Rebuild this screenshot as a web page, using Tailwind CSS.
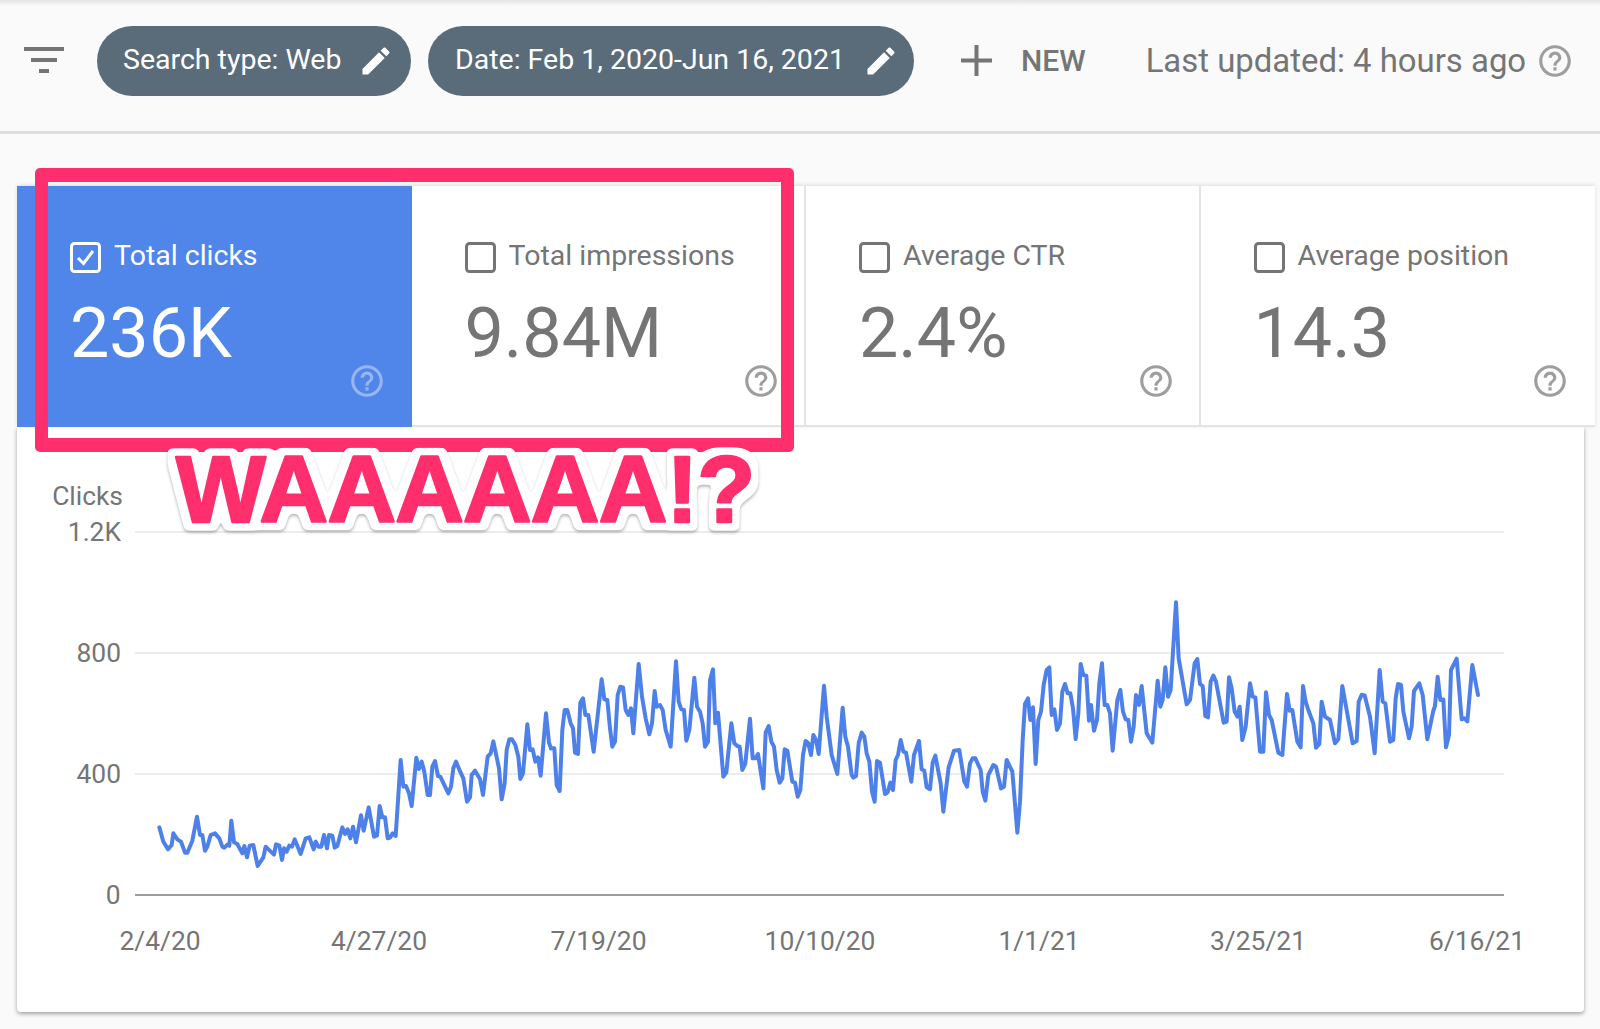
<!DOCTYPE html>
<html lang="en">
<head>
<meta charset="utf-8">
<title>Search performance</title>
<script src="https://cdn.jsdelivr.net/npm/@tailwindcss/browser@4"></script>
</head>
<body class="relative w-[1600px] h-[1029px] overflow-hidden bg-[#fafafa] font-['Roboto',sans-serif] text-[#757575]">
<header class="relative h-[134px] border-b-[3px] border-[#dedede] flex items-center pb-[10px]">
  <div class="absolute left-0 right-0 top-0 h-[6px] bg-gradient-to-b from-[#e4e4e4] to-[#fafafa]"></div>
  <svg class="ml-[24px] w-[40px] h-[26px] shrink-0 -mt-[2px]" viewBox="0 0 40 26" fill="#757575"><rect x="0" y="0" width="40" height="4"/><rect x="7" y="11" width="26" height="4"/><rect x="15" y="22" width="10" height="4"/></svg>
  <div class="ml-[33px] w-[314px] h-[70px] rounded-full bg-[#5a6c7a] text-white flex items-center pl-[26px] text-[28.5px] shrink-0">
    <span class="whitespace-nowrap">Search type: Web</span>
    <svg class="ml-[17px] w-[36px] h-[36px] shrink-0" viewBox="0 0 24 24" fill="#fff"><path d="M3 17.25V21h3.75L17.81 9.94l-3.75-3.75L3 17.25zM20.71 7.04c.39-.39.39-1.02 0-1.41l-2.34-2.34c-.39-.39-1.02-.39-1.41 0l-1.83 1.83 3.75 3.75 1.83-1.83z"/></svg>
  </div>
  <div class="ml-[17px] w-[486px] h-[70px] rounded-full bg-[#5a6c7a] text-white flex items-center pl-[27px] text-[28.5px] shrink-0">
    <span class="whitespace-nowrap">Date: Feb 1, 2020-Jun 16, 2021</span>
    <svg class="ml-[18px] w-[36px] h-[36px] shrink-0" viewBox="0 0 24 24" fill="#fff"><path d="M3 17.25V21h3.75L17.81 9.94l-3.75-3.75L3 17.25zM20.71 7.04c.39-.39.39-1.02 0-1.41l-2.34-2.34c-.39-.39-1.02-.39-1.41 0l-1.83 1.83 3.75 3.75 1.83-1.83z"/></svg>
  </div>
  <svg class="ml-[47px] w-[31px] h-[31px] shrink-0" viewBox="0 0 31 31" fill="#757575"><rect x="13.5" y="0" width="4" height="31"/><rect x="0" y="13.5" width="31" height="4"/></svg>
  <span class="ml-[29px] text-[30px] font-medium whitespace-nowrap">NEW</span>
  <span class="ml-[60px] text-[32.9px] whitespace-nowrap">Last updated: 4 hours ago</span>
  <svg class="ml-[10px] w-[38px] h-[38px] shrink-0" viewBox="0 0 24 24" fill="#9e9e9e"><path d="M11 18h2v-2h-2v2zm1-16C6.48 2 2 6.48 2 12s4.48 10 10 10 10-4.48 10-10S17.52 2 12 2zm0 18c-4.41 0-8-3.59-8-8s3.59-8 8-8 8 3.59 8 8-3.59 8-8 8zm0-14c-2.21 0-4 1.79-4 4h2c0-1.1.9-2 2-2s2 .9 2 2c0 2-3 1.75-3 5h2c0-2.25 3-2.5 3-5 0-2.21-1.79-4-4-4z"/></svg>
</header>

<main class="pt-[52px] pl-[17px]">
  <section class="relative z-10 w-[1578px] h-[241px] grid grid-cols-4 bg-white shadow-[0_-1px_4px_rgba(0,0,0,0.12)]">
    <div class="bg-[#5085e9] text-white pl-[53px] pt-[56px] pr-[26px]">
      <div class="flex items-center gap-[13px] h-[30px]">
        <svg class="w-[31px] h-[31px] shrink-0" viewBox="0 0 31 31" fill="none" stroke="#fff"><rect x="1.5" y="1.5" width="28" height="28" rx="3" stroke-width="3"/><path d="M8 16l5.5 5.5 9.5-12.5" stroke-width="3"/></svg>
        <span class="text-[28.5px] whitespace-nowrap -mt-[2px]">Total clicks</span>
      </div>
      <div class="mt-[26px] text-[70px] leading-[70px] whitespace-nowrap">236K</div>
      <div class="flex justify-end -mt-[6px]"><svg class="w-[38px] h-[38px]" viewBox="0 0 24 24" fill="#fff" fill-opacity="0.4"><path d="M11 18h2v-2h-2v2zm1-16C6.48 2 2 6.48 2 12s4.48 10 10 10 10-4.48 10-10S17.52 2 12 2zm0 18c-4.41 0-8-3.59-8-8s3.59-8 8-8 8 3.59 8 8-3.59 8-8 8zm0-14c-2.21 0-4 1.79-4 4h2c0-1.1.9-2 2-2s2 .9 2 2c0 2-3 1.75-3 5h2c0-2.25 3-2.5 3-5 0-2.21-1.79-4-4-4z"/></svg></div>
    </div>
    <div class="border-r-2 border-b-2 border-[#e4e4e4] pl-[53px] pt-[56px] pr-[24px]">
      <div class="flex items-center gap-[13px] h-[30px]">
        <svg class="w-[31px] h-[31px] shrink-0" viewBox="0 0 31 31" fill="none" stroke="#757575"><rect x="1.5" y="1.5" width="28" height="28" rx="3" stroke-width="3"/></svg>
        <span class="text-[28.5px] whitespace-nowrap -mt-[2px]">Total impressions</span>
      </div>
      <div class="mt-[26px] text-[70px] leading-[70px] whitespace-nowrap">9.84M</div>
      <div class="flex justify-end -mt-[6px]"><svg class="w-[38px] h-[38px]" viewBox="0 0 24 24" fill="#9e9e9e"><path d="M11 18h2v-2h-2v2zm1-16C6.48 2 2 6.48 2 12s4.48 10 10 10 10-4.48 10-10S17.52 2 12 2zm0 18c-4.41 0-8-3.59-8-8s3.59-8 8-8 8 3.59 8 8-3.59 8-8 8zm0-14c-2.21 0-4 1.79-4 4h2c0-1.1.9-2 2-2s2 .9 2 2c0 2-3 1.75-3 5h2c0-2.25 3-2.5 3-5 0-2.21-1.79-4-4-4z"/></svg></div>
    </div>
    <div class="border-r-2 border-b-2 border-[#e4e4e4] pl-[53px] pt-[56px] pr-[24px]">
      <div class="flex items-center gap-[13px] h-[30px]">
        <svg class="w-[31px] h-[31px] shrink-0" viewBox="0 0 31 31" fill="none" stroke="#757575"><rect x="1.5" y="1.5" width="28" height="28" rx="3" stroke-width="3"/></svg>
        <span class="text-[28.5px] whitespace-nowrap -mt-[2px]">Average CTR</span>
      </div>
      <div class="mt-[26px] text-[70px] leading-[70px] whitespace-nowrap">2.4%</div>
      <div class="flex justify-end -mt-[6px]"><svg class="w-[38px] h-[38px]" viewBox="0 0 24 24" fill="#9e9e9e"><path d="M11 18h2v-2h-2v2zm1-16C6.48 2 2 6.48 2 12s4.48 10 10 10 10-4.48 10-10S17.52 2 12 2zm0 18c-4.41 0-8-3.59-8-8s3.59-8 8-8 8 3.59 8 8-3.59 8-8 8zm0-14c-2.21 0-4 1.79-4 4h2c0-1.1.9-2 2-2s2 .9 2 2c0 2-3 1.75-3 5h2c0-2.25 3-2.5 3-5 0-2.21-1.79-4-4-4z"/></svg></div>
    </div>
    <div class="border-b-2 border-[#e4e4e4] pl-[53px] pt-[56px] pr-[26px]">
      <div class="flex items-center gap-[13px] h-[30px]">
        <svg class="w-[31px] h-[31px] shrink-0" viewBox="0 0 31 31" fill="none" stroke="#757575"><rect x="1.5" y="1.5" width="28" height="28" rx="3" stroke-width="3"/></svg>
        <span class="text-[28.5px] whitespace-nowrap -mt-[2px]">Average position</span>
      </div>
      <div class="mt-[26px] text-[70px] leading-[70px] whitespace-nowrap">14.3</div>
      <div class="flex justify-end -mt-[6px]"><svg class="w-[38px] h-[38px]" viewBox="0 0 24 24" fill="#9e9e9e"><path d="M11 18h2v-2h-2v2zm1-16C6.48 2 2 6.48 2 12s4.48 10 10 10 10-4.48 10-10S17.52 2 12 2zm0 18c-4.41 0-8-3.59-8-8s3.59-8 8-8 8 3.59 8 8-3.59 8-8 8zm0-14c-2.21 0-4 1.79-4 4h2c0-1.1.9-2 2-2s2 .9 2 2c0 2-3 1.75-3 5h2c0-2.25 3-2.5 3-5 0-2.21-1.79-4-4-4z"/></svg></div>
    </div>
  </section>

  <section class="w-[1567px] h-[585px] bg-white rounded-b-[4px] shadow-[0_2px_4px_rgba(0,0,0,0.35)]">
    <svg class="block w-[1567px] h-[585px]" viewBox="17 427 1567 585" font-family="Roboto, sans-serif" font-size="26.4" fill="#757575">
      <g stroke="#ececec" stroke-width="2">
        <line x1="135" y1="532" x2="1504" y2="532"/>
        <line x1="135" y1="653" x2="1504" y2="653"/>
        <line x1="135" y1="774" x2="1504" y2="774"/>
      </g>
      <line x1="135" y1="895" x2="1504" y2="895" stroke="#9e9e9e" stroke-width="2"/>
      <text x="123" y="505" text-anchor="end">Clicks</text>
      <text x="121" y="541" text-anchor="end">1.2K</text>
      <text x="121" y="662" text-anchor="end">800</text>
      <text x="121" y="783" text-anchor="end">400</text>
      <text x="120.5" y="904" text-anchor="end">0</text>
      <text x="160" y="950" text-anchor="middle">2/4/20</text>
      <text x="379" y="950" text-anchor="middle">4/27/20</text>
      <text x="598.5" y="950" text-anchor="middle">7/19/20</text>
      <text x="820" y="950" text-anchor="middle">10/10/20</text>
      <text x="1039" y="950" text-anchor="middle">1/1/21</text>
      <text x="1258" y="950" text-anchor="middle">3/25/21</text>
      <text x="1477" y="950" text-anchor="middle">6/16/21</text>
      <g fill="none" stroke="#4d80e9" stroke-width="12" stroke-linejoin="round" stroke-linecap="round">
        <polyline transform="translate(100 580) scale(0.33333)" points="178,742 190,785 204,808 215,795 220,760 232,778 243,785 255,818 262,818 277,782 291,710 300,765 307,765 315,812 322,800 332,765 345,760 358,775 367,800 373,803 383,793 388,797 394,722 402,787 412,792 427,820 433,798 441,832 449,797 460,795 473,858 490,832 497,800 522,824 528,793 538,797 546,840 552,805 560,815 568,797 576,800 584,778 602,822 617,775 628,772 641,808 647,785 655,800 664,800 672,765 681,805 687,765 697,767 704,803 712,798 727,742 735,762 743,748 751,775 759,740 768,787 783,706 791,752 806,682 822,770 831,767 839,678 847,712 855,712 863,775 870,773 878,760 887,768 902,540 910,620 918,618 927,640 935,678 949,533 957,567 965,545 973,575 983,645 990,645 997,560 1005,543 1014,588 1021,590 1045,640 1053,620 1060,565 1068,545 1082,578 1090,595 1101,665 1110,652 1115,585 1125,572 1140,597 1149,645 1163,530 1172,520 1180,484 1197,565 1205,658 1214,610 1220,510 1228,478 1236,478 1246,495 1255,530 1261,597 1269,580 1282,433 1290,510 1298,508 1306,545 1314,532 1322,587 1338,400 1347,488 1353,505"/>
        <polyline transform="translate(550 580) scale(0.33333)" points="3,505 13,505 20,615 29,633 37,450 44,390 52,390 62,430 69,445 75,518 84,522 91,368 99,355 106,405 115,405 131,515 155,298 163,358 172,360 180,445 187,500 195,485 203,345 211,320 219,322 227,390 235,405 243,385 250,460 266,252 276,350 287,415 298,463 306,430 314,333 320,380 330,375 338,390 347,450 362,500 378,244 386,365 394,388 402,390 409,482 418,450 433,293 441,380 450,395 458,430 465,500 474,485 480,300 489,268 496,430 504,398 520,590 529,578 544,430 553,490 562,498 569,500 577,570 586,550 600,416 608,535 616,535 624,522 640,625 647,458 656,438 664,485 672,500 680,570 689,608 697,595 704,508 712,512 727,605 735,608 743,650 751,630 759,525 767,483 775,490 783,525 790,465 798,480 806,522 822,317 830,410 845,525 862,582 878,383 886,470 894,500 905,585 910,593 918,588 926,490 935,458 943,470 950,520 958,545 966,635 974,665 981,543 990,548 1005,642 1013,637 1021,608 1029,630 1037,540 1044,525 1052,480 1060,515 1068,518 1084,605 1092,525 1107,483 1115,568 1123,572 1130,622 1140,628 1148,548 1156,527 1172,610 1180,695 1196,562 1212,512 1228,510 1243,605 1251,620 1260,550 1268,535 1276,535 1292,570 1298,635 1306,662 1315,585 1330,555 1338,560 1353,625"/>
        <polyline transform="translate(1000 580) scale(0.33333)" points="3,625 12,620 20,540 37,575 52,758 60,665 68,480 75,372 84,355 91,420 99,382 107,552 115,420 123,395 131,315 140,270 148,262 155,405 163,388 171,450 180,430 187,335 195,312 203,340 211,340 219,385 227,477 235,400 242,252 250,285 259,287 267,422 273,375 282,452 291,420 298,310 306,250 314,375 322,375 330,400 338,512 352,360 361,330 369,395 377,418 385,420 393,485 401,440 408,345 417,375 425,318 440,460 457,488 473,302 481,380 488,360 496,262 504,350 512,330 528,67 536,235 560,373 570,360 584,250 592,237 600,312 608,318 616,408 624,412 632,305 640,287 648,305 671,428 680,425 687,292 695,325 704,395 712,410 719,380 727,480 737,440 750,310 758,350 766,352 780,515 790,515 798,337 807,405 815,420 835,518 847,525 861,342 869,392 877,390 892,485 902,502 909,318 917,365 925,390 940,430 948,503 958,492 965,365 975,410 990,420 1005,490 1015,478 1027,318 1058,490 1070,483 1076,365 1085,344 1094,346 1110,410 1124,520 1139,270 1148,365 1156,370 1170,485 1180,480 1187,355 1194,312 1203,315 1210,395 1227,475 1235,440 1242,333 1258,310 1268,345 1282,478 1300,392 1305,378 1313,290 1321,360 1330,358 1338,502 1347,465 1353,270 1370,236 1385,418 1393,415 1402,424 1417,255 1434,345"/>
      </g>
    </svg>
  </section>
</main>

<div class="absolute z-20 left-[35px] top-[168px] w-[759px] h-[284px] border-x-[13px] border-y-[14px] border-[#ff2e6c] rounded-[5px]"></div>
<svg class="absolute z-30 left-[150px] top-[430px] w-[640px] h-[120px] overflow-visible" viewBox="150 430 640 120">
  <defs>
    <filter id="sticker" x="-5%" y="-25%" width="110%" height="150%" color-interpolation-filters="sRGB">
      <feMorphology in="SourceAlpha" operator="dilate" radius="7" result="fat"/>
      <feGaussianBlur in="fat" stdDeviation="2.5" result="soft"/>
      <feComponentTransfer in="soft" result="round"><feFuncA type="linear" slope="8" intercept="-3"/></feComponentTransfer>
      <feFlood flood-color="#ffffff"/>
      <feComposite in2="round" operator="in" result="white"/>
      <feDropShadow in="white" dx="0" dy="2" stdDeviation="1.5" flood-color="#000000" flood-opacity="0.28" result="outline"/>
      <feMerge><feMergeNode in="outline"/><feMergeNode in="SourceGraphic"/></feMerge>
    </filter>
  </defs>
  <text x="176" y="522" filter="url(#sticker)" font-family="'Liberation Sans', sans-serif" font-weight="700" font-size="95" letter-spacing="-0.8" fill="#ff2e6c" stroke="#ff2e6c" stroke-width="2.5" stroke-linejoin="round">WAAAAAA!?</text>
</svg>
</body>
</html>
